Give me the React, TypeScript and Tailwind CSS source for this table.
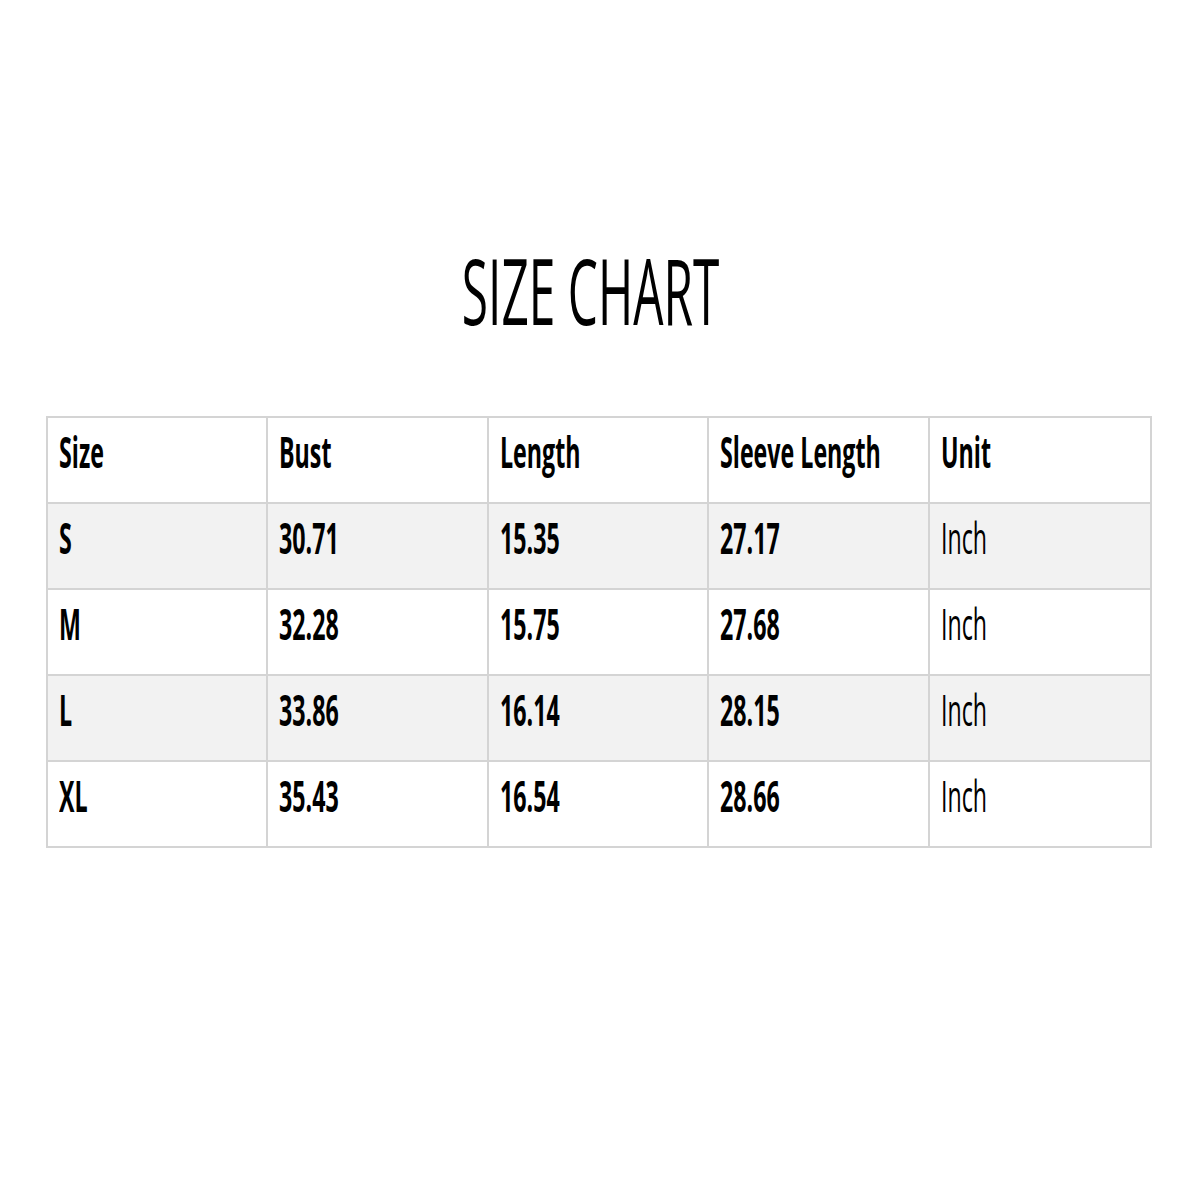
const rows = [
  { size: 'S', bust: '30.71', length: '15.35', sleeve: '27.17', unit: 'Inch' },
  { size: 'M', bust: '32.28', length: '15.75', sleeve: '27.68', unit: 'Inch' },
  { size: 'L', bust: '33.86', length: '16.14', sleeve: '28.15', unit: 'Inch' },
  { size: 'XL', bust: '35.43', length: '16.54', sleeve: '28.66', unit: 'Inch' },
];

function Cell({ children, bold = true, last = false }: { children: React.ReactNode; bold?: boolean; last?: boolean }) {
  return (
    <div className={`flex items-center pl-[11px] pb-[18px] ${last ? '' : 'border-r-2 border-[#d4d4d4]'}`}>
      <span className={`inline-block origin-left scale-x-[0.54] whitespace-nowrap text-[43px] leading-none text-black ${bold ? 'font-bold' : 'font-normal'}`}>
        {children}
      </span>
    </div>
  );
}

export default function App() {
  return (
    <div className="w-[1200px] h-[1200px] bg-white font-['Open_Sans',sans-serif]">
      {/* Title */}
      <div className="flex justify-center pt-[244px] pr-[18px]">
        <h1 className="inline-block scale-x-[0.52] whitespace-nowrap text-[92px] leading-none font-normal text-black">
          SIZE CHART
        </h1>
      </div>

      {/* Table */}
      <div className="ml-[46px] mt-[80px] w-[1106px] border-2 border-[#d4d4d4]">
        <div className="grid grid-cols-5 h-[84px] bg-white">
          <Cell>Size</Cell>
          <Cell>Bust</Cell>
          <Cell>Length</Cell>
          <Cell>Sleeve Length</Cell>
          <Cell last>Unit</Cell>
        </div>
        {rows.map((r, i) => (
          <div
            key={r.size}
            className={`grid grid-cols-5 h-[86px] border-t-2 border-[#d4d4d4] ${i % 2 === 0 ? 'bg-[#f2f2f2]' : 'bg-white'}`}
          >
            <Cell>{r.size}</Cell>
            <Cell>{r.bust}</Cell>
            <Cell>{r.length}</Cell>
            <Cell>{r.sleeve}</Cell>
            <Cell bold={false} last>{r.unit}</Cell>
          </div>
        ))}
      </div>
    </div>
  );
}
